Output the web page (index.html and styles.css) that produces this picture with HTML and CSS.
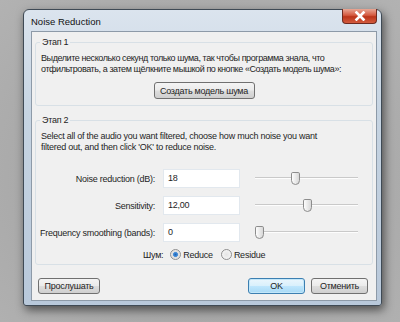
FILE: index.html
```html
<!DOCTYPE html>
<html lang="ru">
<head>
    <meta charset="UTF-8">
    <title>Noise Reduction</title>
    <link rel="stylesheet" href="styles.css">
</head>
<body>
    <div class="window">
        <div class="titlebar">
            <span class="title">Noise Reduction</span>
        </div>
        <div class="close">
            <svg width="14" height="10" viewBox="0 0 14 10">
                <path d="M3.5 1.5 L10.5 8.5 M10.5 1.5 L3.5 8.5" stroke="#fff" stroke-width="2.6" stroke-linecap="square"/>
            </svg>
        </div>
        <div class="client">
            <fieldset class="group step1">
                <legend>Этап 1</legend>
                <p class="ru">Выделите несколько секунд только шума, так чтобы программа знала, что<br>отфильтровать, а затем щёлкните мышкой по кнопке «Создать модель шума»:</p>
                <div class="center">
                    <button class="btn wide">Создать модель шума</button>
                </div>
            </fieldset>

            <fieldset class="group step2">
                <legend>Этап 2</legend>
                <p>Select all of the audio you want filtered, choose how much noise you want<br>filtered out, and then click 'OK' to reduce noise.</p>
                <div class="rows">
                    <div class="row">
                        <label>Noise reduction (dB):</label>
                        <div class="field">18</div>
                        <div class="slider"><span class="thumb" style="left: 36px"></span></div>
                    </div>
                    <div class="row">
                        <label>Sensitivity:</label>
                        <div class="field">12,00</div>
                        <div class="slider"><span class="thumb" style="left: 48px"></span></div>
                    </div>
                    <div class="row">
                        <label>Frequency smoothing (bands):</label>
                        <div class="field">0</div>
                        <div class="slider"><span class="thumb" style="left: 0px"></span></div>
                    </div>
                    <div class="radios">
                        <span class="lbl">Шум:</span>
                        <span class="radio checked"></span><span class="opt">Reduce</span>
                        <span class="radio"></span><span class="opt">Residue</span>
                    </div>
                </div>
            </fieldset>

            <div class="buttons">
                <button class="btn">Прослушать</button>
                <div class="spacer"></div>
                <button class="btn default">OK</button>
                <button class="btn">Отменить</button>
            </div>
        </div>
    </div>
</body>
</html>
```

FILE: styles.css
```css
body {
    margin: 0;
    width: 400px;
    height: 322px;
    overflow: hidden;
    background: radial-gradient(ellipse at 50% 55%, #8f8f8f 0%, #a8a8a8 55%, #b2b2b2 100%);
    font-family: "Liberation Sans", Arial, sans-serif;
    font-size: 9px;
    letter-spacing: -0.25px;
    color: #1e1e1e;
}
.window {
    margin: 9px 0 0 23px;
    width: 359px;
    height: 297px;
    box-sizing: border-box;
    border: 1px solid #3f4a55;
    border-radius: 6px 6px 3px 3px;
    background: linear-gradient(to bottom, #dbe4ee 0%, #c6d4e2 35%, #b8c8da 100%);
    box-shadow: 2px 4px 10px rgba(0, 0, 0, 0.55);
    display: flex;
    flex-direction: column;
    padding: 0 4px 4px 7px;
    position: relative;
}
.titlebar {
    height: 21px;
    display: flex;
    align-items: center;
}
.title {
    font-size: 9.5px;
    letter-spacing: 0;
    color: #111;
    margin-top: 1px;
}
.close {
    position: absolute;
    right: 4px;
    top: -1px;
    width: 35px;
    height: 15px;
    box-sizing: border-box;
    border: 1px solid #6d2a20;
    border-top: none;
    border-radius: 0 0 4px 4px;
    background: linear-gradient(to bottom, #e9a795 0%, #d4593f 45%, #bb3419 55%, #d35b3e 100%);
    display: flex;
    align-items: center;
    justify-content: center;
}
.close svg {
    display: block;
}
.client {
    flex: 1;
    background: #f0f0f0;
    border: 1px solid #8d9aa8;
    padding: 4px 3px 0 3px;
    display: flex;
    flex-direction: column;
}
.group {
    margin: 0;
    min-inline-size: 0;
    border: 1px solid #d8e0e6;
    border-radius: 3px;
    padding: 0 5px 0 5px;
}
.group legend {
    padding: 0 2px;
    margin-left: -1px;
    line-height: 12px;
}
.group p {
    margin: 5px 0 0 0;
    line-height: 11px;
    white-space: nowrap;
}
.group p.ru {
    letter-spacing: -0.42px;
}
.center {
    display: flex;
    justify-content: center;
    margin-top: 7px;
    padding-bottom: 6px;
}
.step2 {
    margin-top: 8px;
    padding-bottom: 3px;
}
.rows {
    margin-top: 16px;
    display: flex;
    flex-direction: column;
    gap: 8px;
}
.row {
    display: flex;
    align-items: center;
    height: 19px;
}
.row label {
    width: 114px;
    display: flex;
    justify-content: flex-end;
    white-space: nowrap;
}
.field {
    margin-left: 8px;
    width: 77px;
    height: 19px;
    box-sizing: border-box;
    background: #fff;
    border: 1px solid #e2e8ee;
    padding: 3px 0 0 4px;
}
.slider {
    margin-left: 15px;
    width: 103px;
    height: 19px;
    position: relative;
}
.slider::before {
    content: "";
    position: absolute;
    left: 0;
    right: 0;
    top: 8px;
    height: 1px;
    background: #c9c9c9;
    border-bottom: 1px solid #fdfdfd;
}
.thumb {
    position: absolute;
    top: 3px;
    width: 9px;
    height: 13px;
    box-sizing: border-box;
    border: 1px solid #8c8c8c;
    border-radius: 2px 2px 5px 5px;
    background: linear-gradient(to right, #fdfdfd, #d8d8d8);
}
.radios {
    display: flex;
    align-items: center;
    height: 13px;
    margin-top: -2px;
    padding-left: 102px;
}
.radios .lbl {
    margin-right: 7px;
}
.radio {
    width: 11px;
    height: 11px;
    box-sizing: border-box;
    border: 1px solid #8f8f8f;
    border-radius: 50%;
    background: radial-gradient(circle, #e4e4e4, #fafafa);
    margin-right: 2px;
}
.radio.checked {
    background: radial-gradient(circle, #1f64b4 0, #4a92dc 2.2px, #dcdcdc 2.8px, #f4f4f4 100%);
}
.opt {
    margin-right: 8px;
}
.buttons {
    display: flex;
    align-items: center;
    margin-top: 13px;
    padding: 0 5px 0 3px;
    gap: 6px;
}
.spacer {
    flex: 1;
}
.btn {
    font-family: inherit;
    font-size: 9px;
    letter-spacing: -0.25px;
    color: #1e1e1e;
    height: 16px;
    width: 57px;
    padding: 0;
    border: 1px solid #707070;
    border-radius: 3px;
    background: linear-gradient(to bottom, #f4f4f4 0%, #ebebeb 48%, #dddddd 52%, #cfcfcf 100%);
}
.btn:first-child {
    width: 62px;
}
.btn.wide {
    width: 101px;
    height: 17px;
}
.btn.default {
    border-color: #3c7fb1;
    box-shadow: inset 0 0 0 1px #c2e7fa;
    background: linear-gradient(to bottom, #eaf6fd 0%, #d9f0fc 48%, #bee6fd 52%, #a7d9f5 100%);
}
```
